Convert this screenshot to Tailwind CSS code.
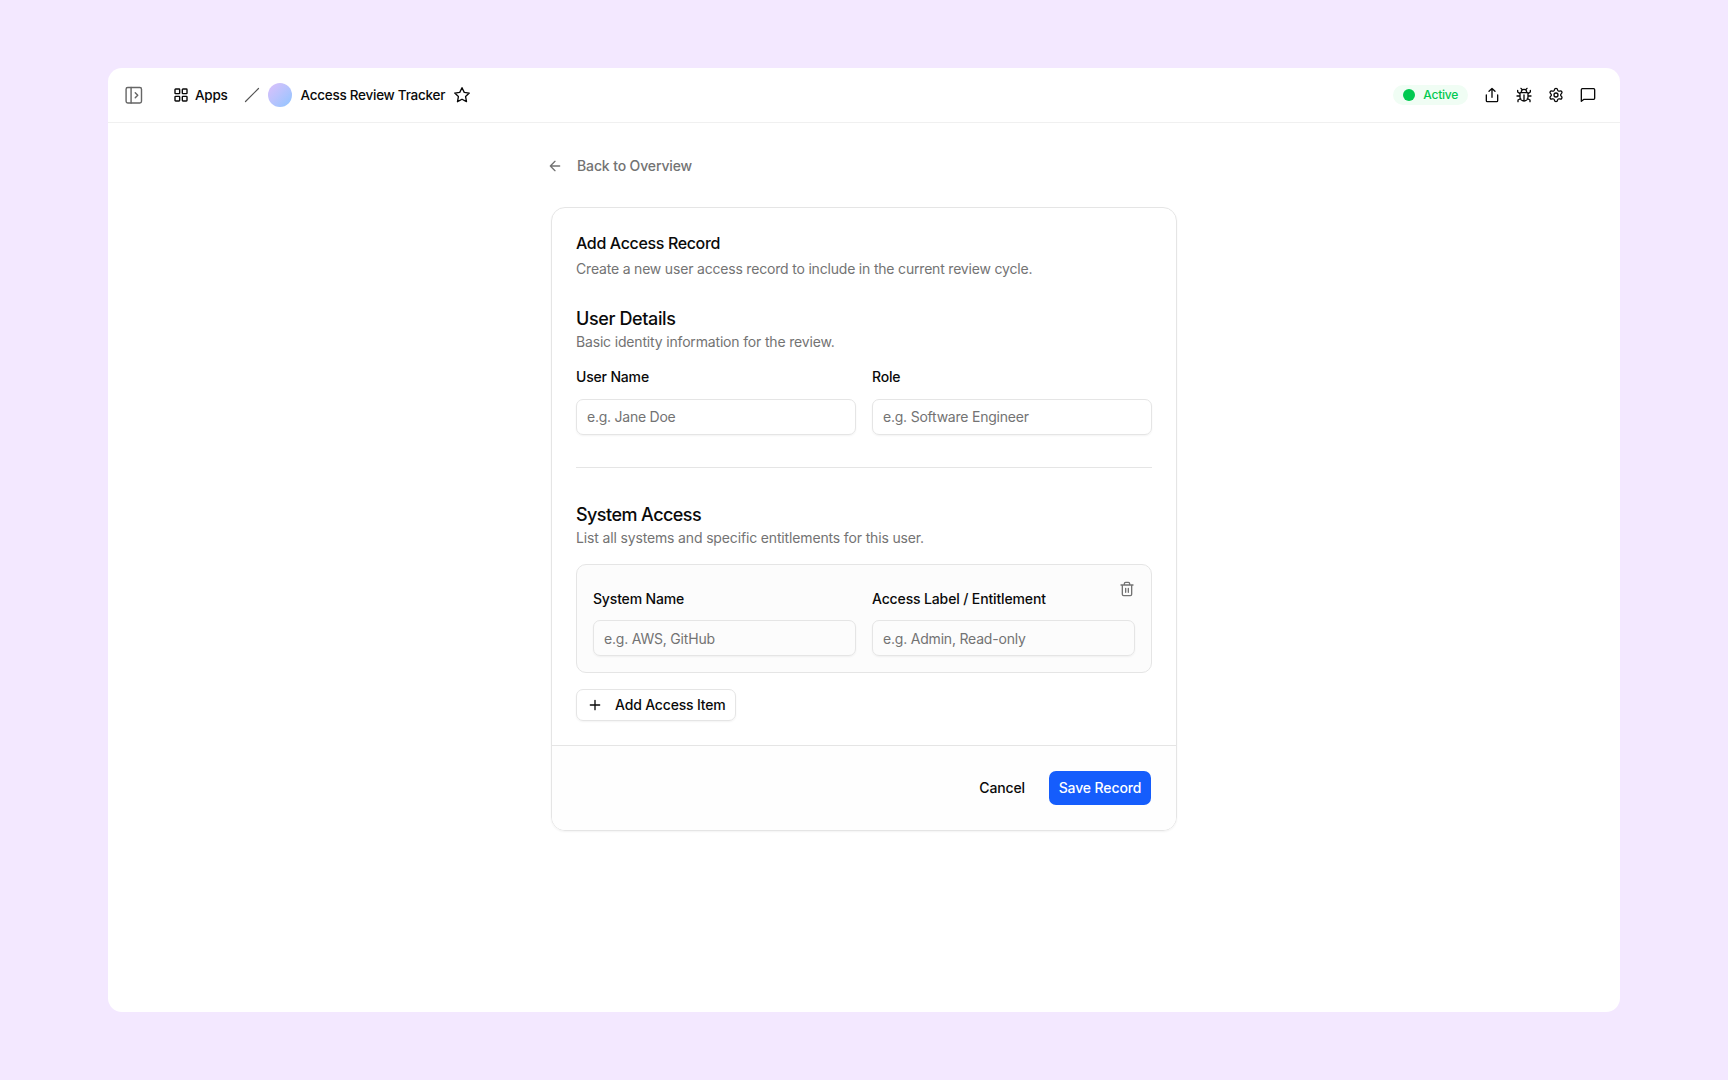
<!DOCTYPE html>
<html lang="en">
  <head>
    <meta charset="UTF-8" />
    <title>Access Review Tracker</title>
    <script src="https://cdn.jsdelivr.net/npm/@tailwindcss/browser@4"></script>
    <style>
      body {
        font-family: 'Inter', sans-serif;
      }
    </style>
  </head>
  <body class="bg-[#f3e8ff] w-[1728px] h-[1080px] overflow-hidden px-[108px] py-[68px] text-[#0a0a0a]">

    <div class="h-[944px] bg-white rounded-[14px] overflow-hidden">

      <!-- Navbar -->
      <header class="h-[55px] border-b border-[#f0f0f0] flex justify-between items-center pl-4 pr-6">
        <div class="flex items-center text-[13.5px] font-medium tracking-[-0.26px]">
          <button aria-label="Toggle sidebar">
            <svg class="w-5 h-5 text-[#666]" viewBox="0 0 24 24" fill="none" stroke="currentColor" stroke-width="1.7" stroke-linejoin="round" stroke-linecap="round"><rect x="2.500" y="3" width="18.5" height="18.5" rx="2" /><path d="M8.500 3v18.5M13.500 9.3l3 3-3 3" /></svg>
          </button>
          <a href="#" class="flex items-center gap-1.5 ml-[29px]">
            <svg class="w-4 h-4" viewBox="0 0 24 24" fill="none" stroke="currentColor" stroke-width="2.1" stroke-linejoin="round"><rect x="3" y="3" width="7" height="7" rx="1" /><rect x="14" y="3" width="7" height="7" rx="1" /><rect x="14" y="14" width="7" height="7" rx="1" /><rect x="3" y="14" width="7" height="7" rx="1" /></svg>
            Apps
          </a>
          <svg class="w-4 h-4 ml-4 text-[#555]" viewBox="0 0 16 16" fill="none" stroke="currentColor" stroke-width="1.2" stroke-linecap="round"><path d="M1.5 14.5 14.5 1.5" /></svg>
          <span class="w-6 h-6 ml-2 rounded-full bg-linear-to-br from-[#dcc0fb] to-[#8ec5ff]"></span>
          <span class="ml-[9px]">Access Review Tracker</span>
          <svg class="w-[18px] h-[18px] ml-2" viewBox="0 0 24 24" fill="none" stroke="currentColor" stroke-width="1.8" stroke-linejoin="round"><path d="m12 2.3 3 6.2 6.7.9-4.9 4.7 1.2 6.8-6-3.2-6 3.2 1.2-6.8-4.9-4.7 6.7-.9z" /></svg>
        </div>

        <div class="flex items-center gap-4">
          <span class="flex items-center gap-2 h-5 pl-2.5 pr-2.5 rounded-full bg-[#f0fdf4] text-[#00c950] text-xs font-medium tracking-[-0.25px]">
            <span class="w-3 h-3 rounded-full bg-[#00c950]"></span>
            Active
          </span>
          <svg class="w-4 h-4" viewBox="0 0 24 24" fill="none" stroke="currentColor" stroke-width="2" stroke-linecap="round" stroke-linejoin="round"><path d="M12 15.5V2.5M7.5 6.5 12 2.3l4.5 4.2M3.5 12v8.5A1.5 1.5 0 0 0 5 22h14a1.5 1.5 0 0 0 1.5-1.5V12" /></svg>
          <svg class="w-4 h-4" viewBox="0 0 24 24" fill="none" stroke="currentColor" stroke-width="2" stroke-linecap="round" stroke-linejoin="round"><path d="M7 8.500h10a1 1 0 0 1 1 1V15a6 6 0 0 1-12 0V9.500a1 1 0 0 1 1-1zM8 8.500V7.500a4 4 0 0 1 8 0v1M12 12V21M7.500 2l2 2.200M16.500 2l-2 2.200M6 13.500H1.500M22.500 13.500H18M6 10 2.500 7.500V5M18 10l3.500-2.500V5M7 17.500l-4 2V22M17 17.500l4 2V22" /></svg>
          <svg class="w-4 h-4" viewBox="0 0 24 24" fill="none" stroke="currentColor" stroke-width="2" stroke-linecap="round" stroke-linejoin="round"><path d="M9.671 4.136a2.34 2.34 0 0 1 4.659 0 2.34 2.34 0 0 0 3.319 1.915 2.34 2.34 0 0 1 2.33 4.033 2.34 2.34 0 0 0 0 3.831 2.34 2.34 0 0 1-2.33 4.033 2.34 2.34 0 0 0-3.319 1.915 2.34 2.34 0 0 1-4.659 0 2.34 2.34 0 0 0-3.32-1.915 2.34 2.34 0 0 1-2.33-4.033 2.34 2.34 0 0 0 0-3.831A2.34 2.34 0 0 1 6.35 6.051a2.34 2.34 0 0 0 3.319-1.915" /><circle cx="12" cy="12" r="3" /></svg>
          <svg class="w-4 h-4" viewBox="0 0 24 24" fill="none" stroke="currentColor" stroke-width="2" stroke-linecap="round" stroke-linejoin="round"><path d="M3.5 2.5h17A1.5 1.5 0 0 1 22 4v13a1.5 1.5 0 0 1-1.5 1.5H6l-4 3V4a1.5 1.5 0 0 1 1.5-1.5z" /></svg>
        </div>
      </header>

      <!-- Main Content -->
      <main class="w-[626px] mx-auto pt-[33px] text-sm tracking-[-0.17px]">
        <a href="#" class="flex items-center gap-3.5 h-5 -ml-1 text-[#737373] font-medium tracking-[-0.13px]">
          <svg class="w-4 h-4" viewBox="0 0 24 24" fill="none" stroke="currentColor" stroke-width="2" stroke-linecap="round" stroke-linejoin="round"><path d="m12 19-7-7 7-7M19 12H5" /></svg>
          Back to Overview
        </a>

        <form class="mt-[31px] border border-[#e5e5e5] rounded-[14px] shadow-xs overflow-hidden">
          <div class="px-6 pt-[23px] pb-6">
            <h1 class="text-base leading-6 font-medium tracking-[-0.36px]">Add Access Record</h1>
            <p class="mt-1 text-[#737373] tracking-[-0.19px]">Create a new user access record to include in the current review cycle.</p>

            <!-- User Details -->
            <h2 class="mt-[26px] text-lg leading-[27px] font-medium tracking-[-0.38px]">User Details</h2>
            <p class="text-[#737373]">Basic identity information for the review.</p>
            <div class="mt-[15px] grid grid-cols-2 gap-4">
              <label class="flex flex-col gap-3 font-medium">
                User Name
                <input type="text" placeholder="e.g. Jane Doe" class="h-9 px-2.5 pb-0.5 border border-[#e5e5e5] rounded-[7px] shadow-xs font-normal tracking-[-0.24px] placeholder:text-[#737373]" />
              </label>
              <label class="flex flex-col gap-3 font-medium">
                Role
                <input type="text" placeholder="e.g. Software Engineer" class="h-9 px-2.5 pb-0.5 border border-[#e5e5e5] rounded-[7px] shadow-xs font-normal tracking-[-0.22px] placeholder:text-[#737373]" />
              </label>
            </div>

            <hr class="mt-8 mb-[33px] border-[#e5e5e5]" />

            <!-- System Access -->
            <h2 class="text-lg leading-[27px] font-medium tracking-[-0.56px]">System Access</h2>
            <p class="text-[#737373] tracking-[-0.15px]">List all systems and specific entitlements for this user.</p>
            <div class="relative mt-4 px-4 pt-6 pb-4 border border-[#e5e5e5] rounded-[10px] bg-[#fcfcfc] grid grid-cols-2 gap-4">
              <label class="flex flex-col gap-[11px] font-medium">
                System Name
                <input type="text" placeholder="e.g. AWS, GitHub" class="h-9 px-2.5 border border-[#e5e5e5] rounded-[7px] shadow-xs font-normal tracking-[-0.2px] placeholder:text-[#737373]" />
              </label>
              <label class="flex flex-col gap-[11px] font-medium tracking-[-0.14px]">
                Access Label / Entitlement
                <input type="text" placeholder="e.g. Admin, Read-only" class="h-9 px-2.5 border border-[#e5e5e5] rounded-[7px] shadow-xs font-normal tracking-[-0.2px] placeholder:text-[#737373]" />
              </label>
              <button type="button" aria-label="Remove item" class="absolute top-4 right-4 text-[#737373]">
                <svg class="w-4 h-4" viewBox="0 0 24 24" fill="none" stroke="currentColor" stroke-width="2" stroke-linecap="round" stroke-linejoin="round"><path d="M10 11v6M14 11v6M19 6v14a2 2 0 0 1-2 2H7a2 2 0 0 1-2-2V6M3 6h18M8 6V4a2 2 0 0 1 2-2h4a2 2 0 0 1 2 2v2" /></svg>
              </button>
            </div>
            <button type="button" class="mt-4 h-8 w-[160px] pl-2.5 flex items-center gap-3 border border-[#e5e5e5] rounded-[7px] shadow-xs font-medium whitespace-nowrap">
              <svg class="w-4 h-4" viewBox="0 0 24 24" fill="none" stroke="currentColor" stroke-width="2" stroke-linecap="round"><path d="M5 12h14M12 5v14" /></svg>
              Add Access Item
            </button>
          </div>

          <!-- Form actions -->
          <div class="h-[85px] pr-[25px] border-t border-[#e5e5e5] bg-[#fefefe] flex items-center justify-end gap-6 font-medium tracking-[-0.12px]">
            <button type="button">Cancel</button>
            <button type="submit" class="w-[102px] h-[34px] rounded-[7px] bg-[#155dfc] text-white">Save Record</button>
          </div>
        </form>
      </main>
    </div>

  </body>
</html>
